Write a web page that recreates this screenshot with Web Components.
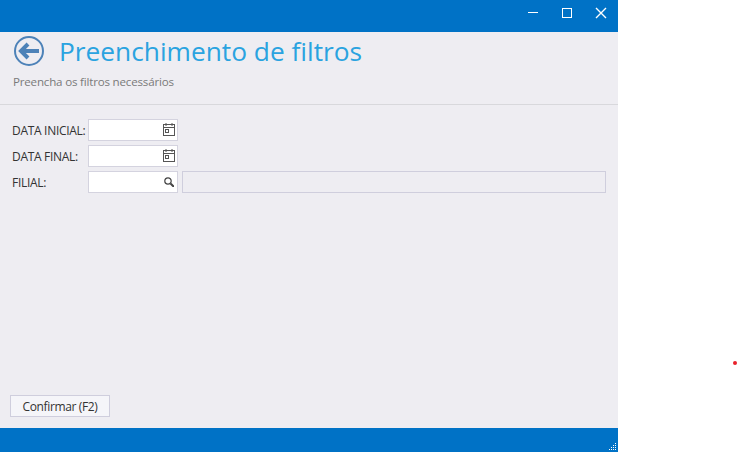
<!DOCTYPE html>
<html lang="pt">
<head>
<meta charset="utf-8">
<title>Preenchimento de filtros</title>
<style>
  html, body { margin: 0; height: 100%; background: #fff; }
  body { font-family: "Open Sans", "Noto Sans", sans-serif; overflow: hidden; }
</style>
</head>
<body>
<filter-window>
  <page-header slot="header" heading="Preenchimento de filtros" sub="Preencha os filtros necessários"></page-header>
  <filter-row label="DATA INICIAL:" icon="calendar"></filter-row>
  <filter-row label="DATA FINAL:" icon="calendar"></filter-row>
  <filter-row label="FILIAL:" icon="search" extra></filter-row>
  <action-button slot="actions">Confirmar (F2)</action-button>
</filter-window>
<red-dot></red-dot>

<script>
// Title bar with the three window buttons
class WindowBar extends HTMLElement {
  constructor() {
    super();
    this.attachShadow({ mode: "open" });
    this.shadowRoot.innerHTML = `
      <style>
        :host { display: flex; justify-content: flex-end; height: 32px; background: #0072c6; }
        svg { display: block; width: 34px; height: 32px; fill: none; stroke: #fff; stroke-width: 1; }
      </style>
      <svg viewBox="0 0 34 32"><path d="M12 12.5h10"/></svg>
      <svg viewBox="0 0 34 32"><rect x="12.5" y="8.5" width="9" height="9"/></svg>
      <svg viewBox="0 0 34 32"><path stroke-width="1.4" d="M12 8l10 10M22 8L12 18"/></svg>
    `;
  }
}

// Back arrow, big title and the small line below it
class PageHeader extends HTMLElement {
  constructor() {
    super();
    this.attachShadow({ mode: "open" });
    this.shadowRoot.innerHTML = `
      <style>
        :host { display: block; height: 72px; border-bottom: 1px solid #d8d8dc; }
        .top { display: flex; align-items: center; height: 38px; padding-left: 14px; }
        svg { display: block; width: 30px; height: 30px; margin: 0 15px 1px 0; }
        h1 { margin: 0; font-size: 26.3px; font-weight: 400; line-height: 38px; color: #2aa3e0; white-space: nowrap; }
        p { margin: 3px 0 0 13px; font-size: 11.6px; letter-spacing: -0.2px; line-height: 18px; color: #7a7a7a; }
      </style>
      <div class="top">
        <svg viewBox="0 0 30 30">
          <circle cx="15" cy="15" r="14" fill="none" stroke="#4d82b8" stroke-width="2"/>
          <path fill="none" stroke="#4d82b8" stroke-width="4" d="M7.500 15H25M14 8l-7 7 7 7"/>
        </svg>
        <h1></h1>
      </div>
      <p></p>
    `;
    this.shadowRoot.querySelector("h1").textContent = this.getAttribute("heading");
    this.shadowRoot.querySelector("p").textContent = this.getAttribute("sub");
  }
}

const ICONS = {
  calendar: `<svg class="cal" viewBox="0 0 12 13" width="12" height="13" fill="none" stroke="#555" stroke-width="1">
      <rect x="0.5" y="1.5" width="11" height="11"/><path d="M0.5 4.500h11M3 0v3M9 0v3"/><rect x="2.500" y="6.500" width="3" height="3"/></svg>`,
  search: `<svg class="find" viewBox="0 0 10 10" width="10" height="10" fill="none" stroke="#444">
      <circle cx="4" cy="4" r="3.200" stroke-width="1.200"/><path stroke-width="2" d="M6.500 6.500L10 10"/></svg>`
};

// Label, input box with its icon, and optionally a read-only box on the right
class FilterRow extends HTMLElement {
  constructor() {
    super();
    this.attachShadow({ mode: "open" });
    const extra = this.hasAttribute("extra");
    this.shadowRoot.innerHTML = `
      <style>
        :host { display: flex; align-items: center; gap: 4px; height: 22px; }
        label { width: 72px; padding-left: 12px; font-size: 12px; color: #333; white-space: nowrap; letter-spacing: -0.3px; }
        .box { display: flex; align-items: center; justify-content: flex-end; box-sizing: border-box; width: 90px; height: 22px; padding-right: 2px; background: #fff; border: 1px solid #d4d3df; }
        .box svg { display: block; }
        .cal { margin-bottom: 2px; }
        .find { margin-right: 1px; }
        .ro { box-sizing: border-box; width: 424px; height: 22px; background: #eeedf2; border: 1px solid #cfcedd; }
      </style>
      <label></label>
      <div class="box">${ICONS[this.getAttribute("icon")]}</div>
      ${extra ? '<div class="ro"></div>' : ""}
    `;
    this.shadowRoot.querySelector("label").textContent = this.getAttribute("label");
  }
}

class ActionButton extends HTMLElement {
  constructor() {
    super();
    this.attachShadow({ mode: "open" });
    this.shadowRoot.innerHTML = `
      <style>
        :host { display: flex; align-items: center; justify-content: center; box-sizing: border-box; width: 100px; height: 22px; font-size: 12px; color: #333; background: #f5f5f9; border: 1px solid #cfcedd; letter-spacing: -0.35px; }
      </style>
      <slot></slot>
    `;
  }
}

// Resize grip dots in the bottom corner
class ResizeGrip extends HTMLElement {
  constructor() {
    super();
    this.attachShadow({ mode: "open" });
    this.shadowRoot.innerHTML = `
      <style>
        :host { display: block; }
        svg { display: block; width: 7px; height: 7px; fill: #fff; }
      </style>
      <svg viewBox="0 0 7 7">
        <path d="M6 0h1v1H6zM4 2h1v1H4zM6 2h1v1H6zM2 4h1v1H2zM4 4h1v1H4zM6 4h1v1H6zM0 6h1v1H0zM2 6h1v1H2zM4 6h1v1H4zM6 6h1v1H6z"/>
      </svg>
    `;
  }
}

// The window itself: bar, header, rows, action area and status bar
class FilterWindow extends HTMLElement {
  constructor() {
    super();
    this.attachShadow({ mode: "open" });
    this.shadowRoot.innerHTML = `
      <style>
        :host { display: flex; flex-direction: column; width: 618px; height: 452px; background: #eeedf2; }
        main { flex: 1; display: flex; flex-direction: column; }
        .rows { display: flex; flex-direction: column; gap: 4px; padding-top: 14px; flex: 1; }
        .actions { padding: 0 0 11px 10px; }
        footer { display: flex; justify-content: flex-end; align-items: flex-end; height: 24px; padding: 0 2px 2px 0; box-sizing: border-box; background: #0072c6; }
      </style>
      <window-bar></window-bar>
      <main>
        <slot name="header"></slot>
        <div class="rows"><slot></slot></div>
        <div class="actions"><slot name="actions"></slot></div>
      </main>
      <footer><resize-grip></resize-grip></footer>
    `;
  }
}

// Small red mark on the empty white area, it lies free on the page
class RedDot extends HTMLElement {
  constructor() {
    super();
    this.attachShadow({ mode: "open" });
    this.shadowRoot.innerHTML = `
      <style>
        :host { position: absolute; left: 733px; top: 361px; width: 4px; height: 4px; border-radius: 50%; background: #e8212b; }
      </style>
    `;
  }
}

customElements.define("window-bar", WindowBar);
customElements.define("page-header", PageHeader);
customElements.define("filter-row", FilterRow);
customElements.define("action-button", ActionButton);
customElements.define("resize-grip", ResizeGrip);
customElements.define("filter-window", FilterWindow);
customElements.define("red-dot", RedDot);
</script>
</body>
</html>
